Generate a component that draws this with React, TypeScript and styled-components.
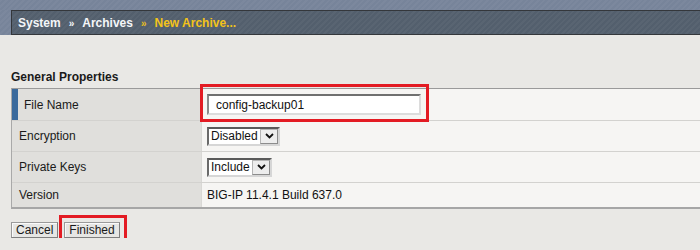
import React from 'react'
import styled, { createGlobalStyle } from 'styled-components'

const GlobalStyle = createGlobalStyle`
  html, body {
    margin: 0;
    padding: 0;
    background: #e9e8e5;
    font-family: "Liberation Sans", Arial, sans-serif;
    font-size: 12px;
    color: #111;
  }
`

const stripes = `repeating-linear-gradient(135deg, rgba(255,255,255,0.035) 0 2px, rgba(0,0,0,0) 2px 4px)`

const TopStripe = styled.div`
  height: 10px;
  background: ${stripes}, #77849a;
`

const HeaderWrap = styled.div`
  background: ${stripes}, #77849a;
  padding-left: 11px;
`

const CrumbBar = styled.div`
  height: 23px;
  display: flex;
  align-items: center;
  gap: 8px;
  padding-left: 6px;
  border: 1px solid #34373b;
  border-right: none;
  background: ${stripes}, #535f6d;
  font-weight: bold;
  font-size: 12px;
`

const Crumb = styled.span<{ $current?: boolean }>`
  color: ${p => (p.$current ? '#f4c31a' : '#f4f6f8')};
`

const Sep = styled.span<{ $current?: boolean }>`
  color: ${p => (p.$current ? '#e9bd22' : '#f4f6f8')};
  font-size: 10px;
  padding-top: 2px;
`

const Content = styled.div`
  padding-left: 11px;
`

const SectionTitle = styled.div`
  margin-top: 35px;
  margin-bottom: 4px;
  line-height: 14px;
  font-weight: bold;
  color: #1a1a1a;
`

const Table = styled.div`
  border-top: 1px solid #9a9a9a;
  border-bottom: 2px solid #a6a6a6;
  border-left: 1px solid #a9a9a9;
`

const Row = styled.div<{ $h: number; $last?: boolean }>`
  display: grid;
  grid-template-columns: 190px 1fr;
  height: ${p => p.$h}px;
  border-bottom: ${p => (p.$last ? 'none' : '1px solid #d3d2cf')};
`

const Label = styled.div<{ $active?: boolean }>`
  display: flex;
  align-items: center;
  background: #e0dfdc;
  border-left: ${p => (p.$active ? '6px solid #3b6a9c' : 'none')};
  padding-left: ${p => (p.$active ? 6 : 7)}px;
  border-right: 1px solid #d9d8d5;
  color: #1a1a1a;
`

const Value = styled.div`
  display: flex;
  align-items: center;
  background: #f6f5f3;
  padding-left: 5px;
  color: #111;
`

/* red annotation frame: pulled out with negative margins so it does not move the control */
const Marked = styled.div<{ $t: number; $r: number; $b: number; $l: number }>`
  position: relative;
  z-index: 1;
  display: flex;
  border: 3px solid #e31b23;
  padding: ${p => `${p.$t - 3}px ${p.$r - 3}px ${p.$b - 3}px ${p.$l - 3}px`};
  margin: ${p => `${-p.$t}px ${-p.$r}px ${-p.$b}px ${-p.$l}px`};
`

const TextInput = styled.div`
  box-sizing: border-box;
  width: 214px;
  height: 21px;
  display: flex;
  align-items: center;
  padding-left: 7px;
  background: #fff;
  border-top: 2px solid #707070;
  border-left: 2px solid #8a8a8a;
  border-right: 2px solid #dcdcdc;
  border-bottom: 2px solid #dcdcdc;
  color: #111;
`

const SelectBox = styled.div<{ $w: number }>`
  box-sizing: border-box;
  width: ${p => p.$w}px;
  height: 19px;
  display: flex;
  background: #fff;
  border-top: 2px solid #5a5a5a;
  border-left: 2px solid #6a6a6a;
  border-right: 2px solid #d6d6d6;
  border-bottom: 2px solid #d6d6d6;
`

const SelectText = styled.div`
  flex: 1;
  display: flex;
  align-items: center;
  padding-left: 2px;
  color: #111;
`

const Arrow = styled.div`
  box-sizing: border-box;
  width: 18px;
  display: flex;
  align-items: center;
  justify-content: center;
  background: #ededed;
  border: 1px solid #b5b5b5;
  border-right-color: #8c8c8c;
  border-bottom-color: #8c8c8c;
`

const Buttons = styled.div`
  margin-top: 13px;
  display: flex;
  align-items: flex-start;
  gap: 6px;
`

const Button = styled.button`
  box-sizing: border-box;
  display: block;
  height: 16px;
  margin: 0;
  padding: 0 4px;
  font-family: "Liberation Sans", Arial, sans-serif;
  font-size: 12px;
  line-height: 14px;
  color: #1a1a1a;
  background: #e6e6e4;
  border: 1px solid #7e7e7e;
  border-top-color: #9a9a9a;
  border-left-color: #9a9a9a;
  box-shadow: inset 1px 1px 0 #fafafa;
`

function Chevron() {
  return (
    <svg width="9" height="6" viewBox="0 0 9 6">
      <path d="M1 1 L4.5 4.5 L8 1" fill="none" stroke="#111" strokeWidth="1.8" />
    </svg>
  )
}

function Select({ value, width }: { value: string; width: number }) {
  return (
    <SelectBox $w={width}>
      <SelectText>{value}</SelectText>
      <Arrow>
        <Chevron />
      </Arrow>
    </SelectBox>
  )
}

export default function App() {
  return (
    <>
      <GlobalStyle />
      <TopStripe />
      <HeaderWrap>
        <CrumbBar>
          <Crumb>System</Crumb>
          <Sep>»</Sep>
          <Crumb>Archives</Crumb>
          <Sep $current>»</Sep>
          <Crumb $current>New Archive...</Crumb>
        </CrumbBar>
      </HeaderWrap>
      <Content>
        <SectionTitle>General Properties</SectionTitle>
        <Table>
          <Row $h={31}>
            <Label $active>File Name</Label>
            <Value>
              <Marked $t={10} $r={8} $b={7} $l={7}>
                <TextInput>config-backup01</TextInput>
              </Marked>
            </Value>
          </Row>
          <Row $h={30}>
            <Label>Encryption</Label>
            <Value>
              <Select value="Disabled" width={73} />
            </Value>
          </Row>
          <Row $h={30}>
            <Label>Private Keys</Label>
            <Value>
              <Select value="Include" width={65} />
            </Value>
          </Row>
          <Row $h={24} $last>
            <Label>Version</Label>
            <Value>BIG-IP 11.4.1 Build 637.0</Value>
          </Row>
        </Table>
        <Buttons>
          <Button>Cancel</Button>
          <Marked $t={7} $r={7} $b={7} $l={5}>
            <Button>Finished</Button>
          </Marked>
        </Buttons>
      </Content>
    </>
  )
}
